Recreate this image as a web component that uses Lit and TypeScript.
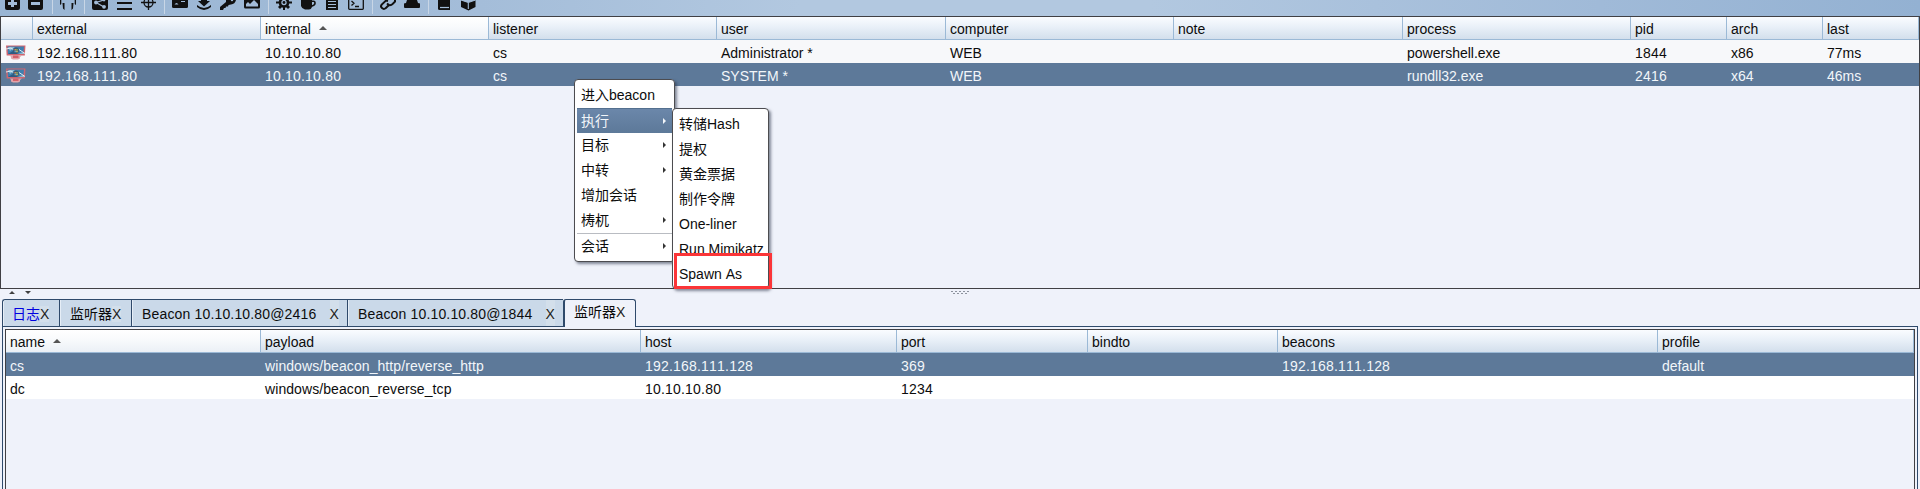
import { LitElement, html, svg, css } from "lit";
import { customElement, property } from "lit/decorators.js";
import { classMap } from "lit/directives/class-map.js";
import { styleMap } from "lit/directives/style-map.js";

interface Column { title: string; width: number; sorted?: boolean; }
interface Row { cells: string[]; selected?: boolean; host?: boolean; }
interface Entry { label: string; sub?: boolean; active?: boolean; rule?: boolean; }

const ICONS: Record<string, unknown> = {
  plus: svg`<path d="M1 0H16V8Q16 10 14 10H3Q1 10 1 8Z"/><path d="M7 0h3v2h3v3h-3v2H7V5H4V2h3z" fill="#a3bcd8"/>`,
  minus: svg`<path d="M0 0H15V8Q15 10 13 10H2Q0 10 0 8Z"/><path d="M3 2h9v3H3z" fill="#a3bcd8"/>`,
  headphones: svg`<path d="M0 0h1.300v4L0 5zM2.500 3h2v7L3 8.500zM14.700 0H16v5l-1.300-1zM13.500 3h-2v7L13 8.500z"/>`,
  share: svg`<path d="M0 0H16V8Q16 10 14 10H2Q0 10 0 8Z"/><path d="M4 2.500 12 0M4 2.500 12 7" stroke="#a3bcd8" stroke-width="1.300"/><circle cx="4" cy="2.500" r="1.900" fill="#a3bcd8"/><circle cx="12" cy="6.800" r="1.900" fill="#a3bcd8"/><circle cx="12" cy="0" r="1.400" fill="#a3bcd8"/>`,
  bars: svg`<path d="M1 2h15v2H1zM1 8h15v2H1z"/>`,
  target: svg`<g fill="none" stroke="#111" stroke-width="1.300"><circle cx="8.500" cy="2.500" r="4.500"/><path d="M8.500 0v10M1 2.500h15"/></g>`,
  card: svg`<path d="M0 0H16V6.500Q16 8 14.500 8H1.500Q0 8 0 6.500Z"/><path d="M2.500 4.500q2-3 4 0zM9 1h4v1H9z" fill="#a3bcd8"/>`,
  download: svg`<path d="M5 0h6v1h3L8 6.500 2 1h3z"/><path d="M1 5v2q7 6 14 0V5q-7 6-14 0z"/>`,
  key: svg`<path d="M6 0h10q-1 4-5 4.500L8.500 5 8 6.500H6L5.500 8H4L3 10H0V7l6-5z"/><circle cx="12" cy="0" r="1.200" fill="#a3bcd8"/>`,
  image: svg`<path d="M0 0H16V7Q16 8.500 14.500 8.500H1.500Q0 8.500 0 7Z"/><path d="M2 6.500V4l2-2 2 2 4-4 4 4v2.500z" fill="#a3bcd8"/>`,
  gear: svg`<circle cx="8" cy="2.500" r="4" fill="none" stroke="#111" stroke-width="2.600"/><circle cx="8" cy="2.500" r="1.400"/><path d="M7 7h2v3H7zM0 1.500h3v2H0zM13 1.500h3v2h-3zM2 7l2-2 2 2-2 2zM10 7l2-2 2 2-2 2z"/>`,
  cup: svg`<path d="M1 0H12V7Q11 9.500 9 9.500H5Q2 9 1 6Z"/><path d="M12 1.300h1.500q1.500 0 1.500 2t-3.500 3" fill="none" stroke="#111" stroke-width="1.600"/>`,
  doc: svg`<path d="M2 0H14V10H2Z"/><path d="M4 1.500h8M4 4.500h8M4 7.500h8" stroke="#a3bcd8" stroke-width="1"/>`,
  terminal: svg`<path d="M.7 0v8.500q0 .8.8.8h13q.8 0 .8-.8V0M3.500 1 6 3.300 3.500 5.600M7 6.500h4" fill="none" stroke="#111" stroke-width="1.300"/>`,
  link: svg`<g fill="none" stroke="#111" stroke-width="2"><path d="m8 1-2-.4-4.300 4q-1.500 2 .3 3.500t3.600.2L9 5"/><path d="m7 3.500 2 1.600q2 .5 3.500-1L15 1.500V0"/></g>`,
  hat: svg`<path d="M3 0h10l1 3 2 .5V7q0 1-1 1H1Q0 8 0 7V3.500L2 3z"/>`,
  book: svg`<path d="M2 0H14V10H3.500Q2 10 2 8.500Z"/><path d="M4 7.500h9" stroke="#a3bcd8" stroke-width="1.200"/>`,
  cube: svg`<path d="M1 0 8 2.500 15.500 0V7L8.500 10.500 1 7Z"/><path d="M8.300 2.500V9M1 0 8.300 2.500 15.500 0" stroke="#a3bcd8" stroke-width="1.100" fill="none"/>`,
};

const TOOLS = ["plus", "minus", "|", "headphones", "|", "share", "bars", "target", "|", "card", "download", "key", "image",
  "|", "gear", "cup", "doc", "terminal", "|", "link", "hat", "|", "book", "cube"];

@customElement("tool-bar")
class ToolBar extends LitElement {
  static styles = css`
    :host { display: flex; flex: none; gap: 8px; padding-left: 4px; height: 16px; overflow: hidden;
      background: linear-gradient(90deg, #99b5d3 0, #a4bdd9 480px, #b2c8e0 800px, #b2c8e0 1150px, #a0bad8 1600px, #93b1d2 1920px); }
    svg { flex: none; width: 16px; height: 12px; fill: #111; }
    .sep { width: 1px; height: 14px; margin-right: -1px; background: #c8d6e6; }
  `;
  render() {
    return TOOLS.map((t) => t === "|" ? html`<span class="sep"></span>` : html`<svg viewBox="0 0 16 12">${ICONS[t]}</svg>`);
  }
}

@customElement("data-table")
class DataTable extends LitElement {
  @property({ attribute: false }) columns: Column[] = [];
  @property({ attribute: false }) rows: Row[] = [];
  @property() tone = "#fff";
  static styles = css`
    :host { display: block; box-sizing: border-box; border: 1px solid #404044; background: #eff2fa; color: #0c0c0c; }
    .line { display: grid; height: 23px; line-height: 26px; white-space: pre; }
    .head { box-sizing: border-box; border-bottom: 1px solid #9bb9d6; }
    .th { box-sizing: border-box; height: 22px; padding-left: 4px; line-height: 25px; border-right: 1px solid #9bb9d6;
      background: linear-gradient(#fafcff, #e9f0f8 45%, #d3dfec); }
    .sorted { background: linear-gradient(#fff, #f8fafc 45%, #ebf0f6); }
    .arrow { width: 8px; height: 4px; margin-left: 8px; vertical-align: 4px; fill: #555; }
    .td { padding-left: 4px; }
    .num { letter-spacing: .2px; }
    .path { letter-spacing: .08px; }
    .selected { background: #5d7999; color: #f2f6fa; }
    .pc { display: block; width: 21px; height: 15px; margin: 5px 0 0 0; }
  `;
  render() {
    const grid = { gridTemplateColumns: this.columns.map((c) => c.width + "px").join(" ") };
    return html`
      <div class="line head" style=${styleMap(grid)}>
        ${this.columns.map((c) => html`<div class=${classMap({ th: true, sorted: !!c.sorted })}>${c.title}${c.sorted
          ? html`<svg class="arrow" viewBox="0 0 8 4"><path d="M0 4 4 0 8 4z"/></svg>` : ""}</div>`)}
      </div>
      ${this.rows.map((r) => html`<div class=${classMap({ line: true, selected: !!r.selected })}
        style=${styleMap(r.selected ? grid : { ...grid, background: this.tone })}>
        ${r.host ? html`<div class="td">${this.host()}</div>` : ""}
        ${r.cells.map((c) => html`<div class=${classMap({ td: true, num: /^[\d.]+$/.test(c), path: c.includes("_") })}>${c}</div>`)}
      </div>`)}`;
  }
  private host() {
    return html`<svg class="pc" viewBox="0 0 21 15">
      <path d="M1 .5H20.500L19.800 10.500H1.700z" fill="#cf6670"/>
      <path d="M2.500 1.500h16.500L18.300 9H3z" fill="#3f7fae"/>
      <path d="M3 2h7L5 6z" fill="#86bad4"/>
      <path d="M3 9 8 6l5 3z" fill="#2b5b84"/>
      <path d="M13 8.500 19 7v2z" fill="#9cc4d8"/>
      <path d="M1 4 6 3l3 2M14 4.500l6 4" stroke="#e3e9ee" stroke-width="1" fill="none"/>
      <circle cx="11" cy="5.500" r="2.900" fill="#3d5a70"/>
      <path d="M9.500 4H11v1.500H9.500z" fill="#cf8a55"/><path d="M11.200 4h1.500v1.500h-1.500z" fill="#8dab5a"/>
      <path d="M9.500 5.800H11v1.500H9.500z" fill="#58a2cf"/><path d="M11.200 5.800h1.500v1.500h-1.500z" fill="#d8c56b"/>
      <path d="M5 10.500h12l-2 1.500v1.500l-2 1H8l-2-1V12z" fill="#e0a3aa"/>
      <path d="M8 10.500h5.500V13H8z" fill="#d25f69"/>
    </svg>`;
  }
}

@customElement("popup-menu")
class PopupMenu extends LitElement {
  @property({ attribute: false }) entries: Entry[] = [];
  static styles = css`
    :host { box-sizing: border-box; display: block; border: 1px solid #4c4c50; border-radius: 4px; background: #fff;
      box-shadow: 2px 2px 3px rgba(40, 50, 70, .55); color: #0c0c0c; padding: 3px 2px; }
    .item { display: flex; justify-content: space-between; height: 25px; padding: 0 6px 0 4px; line-height: 24px; white-space: pre; }
    .rule { border-top: 1px solid #b9bcc2; }
    .active { box-sizing: border-box; background: linear-gradient(#6b87aa, #5d7999); color: #f2f6fa; border-top: 1px solid #54708f; }
    svg { width: 3px; height: 6px; fill: #333; margin-top: 9px; }
    .active svg { fill: #f2f6fa; }
  `;
  render() {
    return this.entries.map((e) => html`<div class=${classMap({ item: true, rule: !!e.rule, active: !!e.active })}>
      <span>${e.label}</span>${e.sub ? html`<svg viewBox="0 0 3 6"><path d="M0 0 3 3 0 6z"/></svg>` : ""}</div>`);
  }
}

@customElement("app-root")
class AppRoot extends LitElement {
  static styles = css`
    :host { display: flex; flex-direction: column; position: relative; width: 1920px; height: 489px; overflow: hidden;
      background: #eff2fa; font: 14px "Liberation Sans", "Noto Sans CJK SC", sans-serif; font-kerning: none; color: #0c0c0c; }
    .sessions { flex: none; height: 273px; }
    .divider { display: flex; flex: none; height: 10px; padding: 2px 0 0 9px; box-sizing: border-box; }
    .knobs { width: 22px; height: 4px; fill: #404040; }
    .grip { width: 18px; height: 4px; margin-left: 920px; fill: #8d939e; }
    .tabs { display: flex; flex: none; height: 28px; padding-left: 2px; box-sizing: border-box; position: relative; z-index: 1; margin-bottom: -1px; }
    .tab { box-sizing: border-box; height: 28px; border: 1px solid #2f4a6b; border-right-width: 0; padding-left: 9px;
      background: #cad9e9; line-height: 28px; white-space: pre; box-shadow: inset 1px 0 #e6eef7; }
    .tab:first-child { border-top-left-radius: 3px; }
    .log { color: #0000e0; width: 57px; }
    .short { width: 72px; padding-left: 10px; }
    .beacon { display: flex; justify-content: space-between; width: 216px; padding: 0 8px 0 10px; letter-spacing: .16px; }
    .front { width: 73px; background: #eff2fa; padding-left: 9px; border-width: 1px 1px 0 2px; border-radius: 3px 3px 0 0; line-height: 25px; box-shadow: none; }
    .x { color: #222; background: #d3dfeb; }
    .front .x { background: #f3f4f7; }
    .pane { flex: 1; box-sizing: border-box; margin: 0 2px 0 2px; border: 1px solid #2f4a6b; border-bottom: 0; padding: 2px 2px 0; }
    .listeners { height: 180px; }
    .context { position: absolute; left: 574px; top: 79px; width: 101px; height: 183px; }
    .submenu { position: absolute; left: 672px; top: 108px; width: 97px; height: 181px; }
    .mark { position: absolute; left: 674px; top: 253px; width: 98px; height: 36px; box-sizing: border-box; border: 3px solid #fb3538; }
  `;
  private sessionColumns: Column[] = [
    { title: "", width: 32 }, { title: "external", width: 228 }, { title: "internal", width: 228, sorted: true },
    { title: "listener", width: 228 }, { title: "user", width: 229 }, { title: "computer", width: 228 },
    { title: "note", width: 229 }, { title: "process", width: 228 }, { title: "pid", width: 96 },
    { title: "arch", width: 96 }, { title: "last", width: 96 },
  ];
  private sessions: Row[] = [
    { host: true, cells: ["192.168.111.80", "10.10.10.80", "cs", "Administrator *", "WEB", "", "powershell.exe", "1844", "x86", "77ms"] },
    { host: true, selected: true, cells: ["192.168.111.80", "10.10.10.80", "cs", "SYSTEM *", "WEB", "", "rundll32.exe", "2416", "x64", "46ms"] },
  ];
  private listenerColumns: Column[] = [
    { title: "name", width: 255, sorted: true }, { title: "payload", width: 380 }, { title: "host", width: 256 },
    { title: "port", width: 191 }, { title: "bindto", width: 190 }, { title: "beacons", width: 380 }, { title: "profile", width: 256 },
  ];
  private listeners: Row[] = [
    { selected: true, cells: ["cs", "windows/beacon_http/reverse_http", "192.168.111.128", "369", "", "192.168.111.128", "default"] },
    { cells: ["dc", "windows/beacon_reverse_tcp", "10.10.10.80", "1234", "", "", ""] },
  ];
  private menu: Entry[] = [
    { label: "进入beacon" }, { label: "执行", sub: true, active: true }, { label: "目标", sub: true }, { label: "中转", sub: true },
    { label: "增加会话" }, { label: "梼杌", sub: true }, { label: "会话", sub: true, rule: true },
  ];
  private submenu: Entry[] = ["转储Hash", "提权", "黄金票据", "制作令牌", "One-liner", "Run Mimikatz", "Spawn As"].map((label) => ({ label }));

  render() {
    return html`
      <tool-bar></tool-bar>
      <data-table class="sessions" tone="#f7f8fa" .columns=${this.sessionColumns} .rows=${this.sessions}></data-table>
      <div class="divider">
        <svg class="knobs" viewBox="0 0 22 4"><path d="M0 3 3 0 6 3zM16 0h6l-3 3z"/></svg>
        <svg class="grip" viewBox="0 0 18 4">${[0, 4, 8, 12, 16].map((x) => svg`<path d="M${x} 0h2v1h-2zM${x + 2} 2h2v1h-2z"/>`)}</svg>
      </div>
      <div class="tabs">
        <div class="tab log">日志<span class="x">X</span></div>
        <div class="tab short">监听器<span class="x">X</span></div>
        <div class="tab beacon"><span>Beacon 10.10.10.80@2416</span><span class="x">X</span></div>
        <div class="tab beacon"><span>Beacon 10.10.10.80@1844</span><span class="x">X</span></div>
        <div class="tab front">监听器<span class="x">X</span></div>
      </div>
      <div class="pane">
        <data-table class="listeners" .columns=${this.listenerColumns} .rows=${this.listeners}></data-table>
      </div>
      <popup-menu class="context" .entries=${this.menu}></popup-menu>
      <popup-menu class="submenu" .entries=${this.submenu}></popup-menu>
      <div class="mark"></div>`;
  }
}
